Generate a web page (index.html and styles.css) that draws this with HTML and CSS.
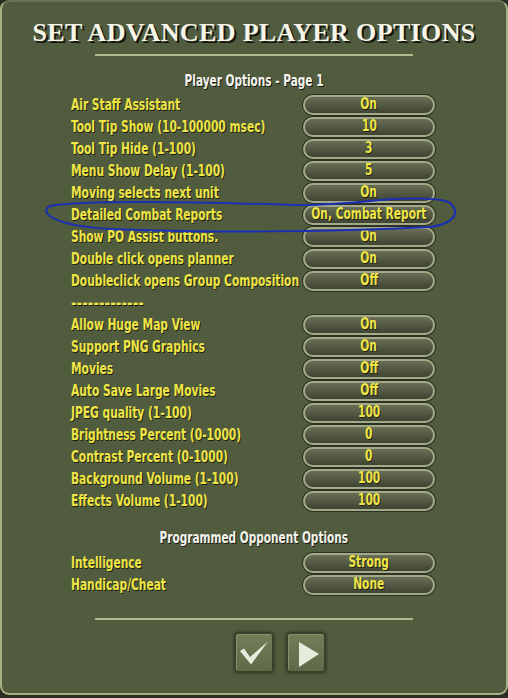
FILE: index.html
```html
<!DOCTYPE html>
<html lang="en">
<head>
    <meta charset="UTF-8">
    <meta name="viewport" content="width=device-width, initial-scale=1.0">
    <title>Set Advanced Player Options</title>
    <link rel="stylesheet" href="styles.css">
</head>
<body>
    <div class="panel">
        <h1 class="title">SET ADVANCED PLAYER OPTIONS</h1>
        <hr class="rule">

        <h2 class="section-title"><span>Player Options - Page 1</span></h2>
        <ul class="options">
            <li class="option"><span class="option-label">Air Staff Assistant</span><button class="option-value"><span>On</span></button></li>
            <li class="option"><span class="option-label">Tool Tip Show (10-100000 msec)</span><button class="option-value"><span>10</span></button></li>
            <li class="option"><span class="option-label">Tool Tip Hide (1-100)</span><button class="option-value"><span>3</span></button></li>
            <li class="option"><span class="option-label">Menu Show Delay (1-100)</span><button class="option-value"><span>5</span></button></li>
            <li class="option"><span class="option-label">Moving selects next unit</span><button class="option-value"><span>On</span></button></li>
            <li class="option"><span class="option-label">Detailed Combat Reports</span><button class="option-value"><span>On, Combat Report</span></button></li>
            <li class="option"><span class="option-label">Show PO Assist buttons.</span><button class="option-value"><span>On</span></button></li>
            <li class="option"><span class="option-label">Double click opens planner</span><button class="option-value"><span>On</span></button></li>
            <li class="option"><span class="option-label">Doubleclick opens Group Composition</span><button class="option-value"><span>Off</span></button></li>
            <li class="option"><span class="option-label separator">-------------</span></li>
            <li class="option"><span class="option-label">Allow Huge Map View</span><button class="option-value"><span>On</span></button></li>
            <li class="option"><span class="option-label">Support PNG Graphics</span><button class="option-value"><span>On</span></button></li>
            <li class="option"><span class="option-label">Movies</span><button class="option-value"><span>Off</span></button></li>
            <li class="option"><span class="option-label">Auto Save Large Movies</span><button class="option-value"><span>Off</span></button></li>
            <li class="option"><span class="option-label">JPEG quality (1-100)</span><button class="option-value"><span>100</span></button></li>
            <li class="option"><span class="option-label">Brightness Percent (0-1000)</span><button class="option-value"><span>0</span></button></li>
            <li class="option"><span class="option-label">Contrast Percent (0-1000)</span><button class="option-value"><span>0</span></button></li>
            <li class="option"><span class="option-label">Background Volume (1-100)</span><button class="option-value"><span>100</span></button></li>
            <li class="option"><span class="option-label">Effects Volume (1-100)</span><button class="option-value"><span>100</span></button></li>
        </ul>

        <h2 class="section-title opponent-title"><span>Programmed Opponent Options</span></h2>
        <ul class="options">
            <li class="option"><span class="option-label">Intelligence</span><button class="option-value"><span>Strong</span></button></li>
            <li class="option"><span class="option-label">Handicap/Cheat</span><button class="option-value"><span>None</span></button></li>
        </ul>

        <hr class="rule bottom-rule">

        <div class="actions">
            <button class="icon-btn" title="Accept">
                <svg width="38" height="39" viewBox="0 0 38 39">
                    <path d="M5 18 L9 15.5 L15 24 L33 8.5 L16 31.5 Z" fill="#e6ecdc"/>
                </svg>
            </button>
            <button class="icon-btn" title="Next page">
                <svg width="38" height="39" viewBox="0 0 38 39">
                    <path d="M12 9 L32 21 L12 34 Z" fill="#e6ecdc"/>
                </svg>
            </button>
        </div>

        <!-- pen mark circled round the combat report row -->
        <svg class="pen-mark" width="508" height="695" viewBox="0 0 508 695">
            <path d="M300 205 C220 203 90 199 50 206 C38 212 54 226 110 229 C200 233 330 232 430 227 C452 224 462 214 450 203 C440 197 410 198 380 200 C350 203 320 205 300 205"
                  fill="none" stroke="#1b2fb4" stroke-width="2" stroke-linecap="round"/>
        </svg>
    </div>
</body>
</html>
```

FILE: styles.css
```css
body, html {
    margin: 0;
    background-color: #2b2c22;
}

.panel {
    position: relative;
    width: 508px;
    height: 695px;
    box-sizing: border-box;
    border: 2px solid #a7b083;
    border-top-color: #6a7452;
    border-radius: 9px;
    background-color: #505c3d;
    font-family: "DejaVu Sans Condensed", "DejaVu Sans", sans-serif;
    font-weight: bold;
}

.title {
    margin: 16px 0 0;
    font-family: "Liberation Serif", serif;
    font-size: 26px;
    line-height: 30px;
    letter-spacing: 0.35px;
    text-align: center;
    color: #f7f5ea;
    text-shadow: 2px 2px 0 #14150f;
}

.rule {
    width: 318px;
    height: 2px;
    margin: 6px 0 0 93px;
    border: none;
    background-color: #b1b98f;
}

/* the game face is very narrow, so the condensed face is squeezed a bit more */
.section-title {
    margin: 14px 0 2px;
    font-size: 15px;
    line-height: 22px;
    text-align: center;
    color: #f4f3ec;
    text-shadow: 1px 1px 0 #16170f;
}

.section-title span {
    display: inline-block;
    transform: scaleX(0.78);
    white-space: nowrap;
}

.options {
    list-style-type: none;
    margin: 0;
    padding: 0 0 0 69px;
}

.option {
    display: grid;
    grid-template-columns: 232px 132px;
    align-items: center;
    height: 22px;
}

.option-label {
    justify-self: start;
    display: inline-block;
    font-size: 15px;
    line-height: 22px;
    color: #efe546;
    text-shadow: 1px 1px 0 #1c1d12;
    white-space: nowrap;
    transform: scaleX(0.79);
    transform-origin: left center;
}

.option-label.separator {
    transform: none;
}

.option-value {
    display: flex;
    justify-content: center;
    align-items: center;
    height: 20px;
    margin: 0;
    padding: 0 0 2px;
    border: 2px solid #a3aa88;
    border-radius: 10px;
    background: linear-gradient(#686e55, #3f4433);
    box-shadow: 0 0 0 1px #2d3124;
    font-family: inherit;
    font-weight: bold;
    font-size: 15px;
    line-height: 14px;
    color: #efe546;
    text-shadow: 1px 1px 0 #1c1d12;
    white-space: nowrap;
    cursor: pointer;
}

.option-value span {
    flex-shrink: 0;
    transform: scaleX(0.79);
}

.opponent-title {
    margin-top: 15px;
    margin-bottom: 3px;
}

.bottom-rule {
    margin-top: 22px;
}

.actions {
    display: flex;
    gap: 14px;
    padding-left: 233px;
    margin-top: 13px;
}

.icon-btn {
    width: 38px;
    height: 39px;
    padding: 0;
    border: 1px solid #39402b;
    border-radius: 3px;
    background: linear-gradient(#737d58, #5f6948);
    box-shadow: 0 0 3px 1px #2a2f20, inset 1px 1px 0 #87906a;
    cursor: pointer;
}

.icon-btn svg {
    display: block;
    margin: -1px;
}

.pen-mark {
    position: absolute;
    top: -2px;
    left: -2px;
    pointer-events: none;
}
```
